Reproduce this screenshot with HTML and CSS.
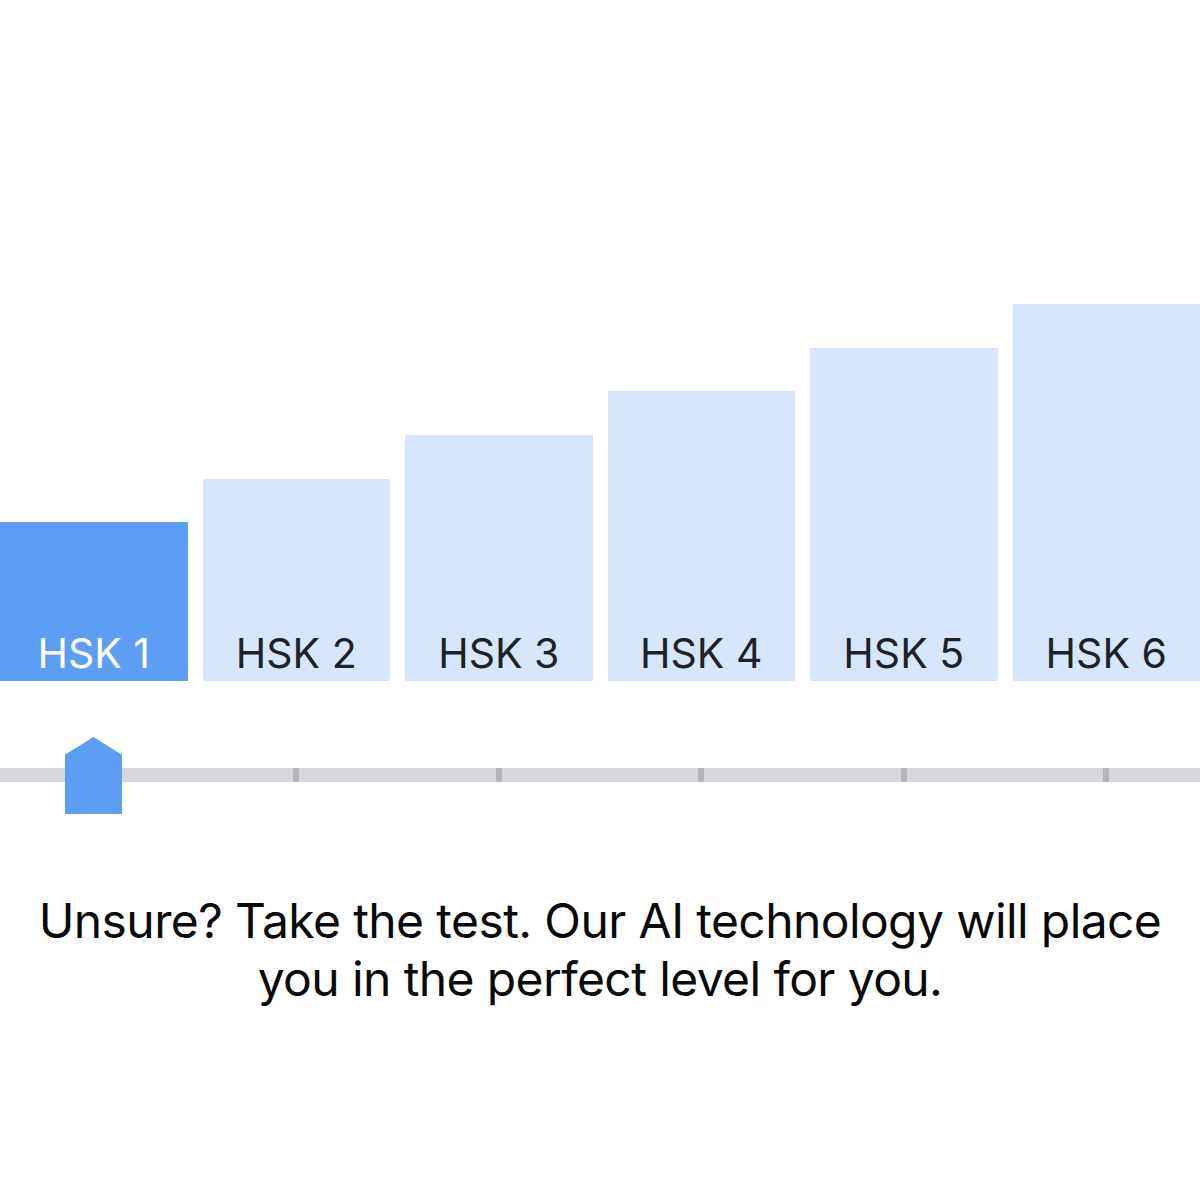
FILE: index.html
```html
<!DOCTYPE html>
<html lang="en">
  <head>
    <meta charset="UTF-8" />
    <title>Choose your level</title>
    <link rel="stylesheet" href="styles.css">
  </head>
  <body>
    <div class="level-picker">
      <div class="chart">
        <div class="bar active" style="height: 159px"><span>HSK 1</span></div>
        <div class="bar" style="height: 202px"><span>HSK 2</span></div>
        <div class="bar" style="height: 246px"><span>HSK 3</span></div>
        <div class="bar" style="height: 290px"><span>HSK 4</span></div>
        <div class="bar" style="height: 333px"><span>HSK 5</span></div>
        <div class="bar" style="height: 377px"><span>HSK 6</span></div>
      </div>

      <div class="slider">
        <div class="track">
          <div class="stop"><i></i></div>
          <div class="stop"><i></i></div>
          <div class="stop"><i></i></div>
          <div class="stop"><i></i></div>
          <div class="stop"><i></i></div>
          <div class="stop"><i></i></div>
        </div>
        <div class="thumb"></div>
      </div>

      <p class="hint">
        Unsure? Take the test. Our AI technology will place<br />
        you in the perfect level for you.
      </p>
    </div>
  </body>
</html>
```

FILE: styles.css
```css
body {
  margin: 0;
  padding: 0;
  background: #ffffff;
  font-family: "Inter", "Roboto", sans-serif;
}

.level-picker {
  width: 1200px;
  overflow: hidden;
}

.chart {
  display: flex;
  align-items: flex-end;
  gap: 15px;
  margin-top: 304px;
}

.bar {
  flex: 1;
  display: flex;
  align-items: flex-end;
  justify-content: center;
  background-color: #d7e6fa;
  color: #1d2229;
  font-size: 41px;
  line-height: 1;
  padding-bottom: 7px;
  box-sizing: border-box;
}

.bar.active {
  background-color: #5b9ef4;
  color: #ffffff;
}

/* Slider */
.slider {
  position: relative;
  height: 77px;
  margin-top: 56px;
}

.track {
  position: absolute;
  left: 0;
  right: 0;
  top: 31px;
  height: 14px;
  background-color: #d6d6db;
  display: flex;
  gap: 15px;
}

.stop {
  flex: 1;
  display: flex;
  justify-content: center;
}

.stop i {
  display: block;
  width: 6px;
  height: 14px;
  background-color: #b5b5ba;
}

.thumb {
  position: absolute;
  left: 65px;
  top: 0;
  width: 57px;
  height: 77px;
  background-color: #5b9ef4;
  clip-path: polygon(50% 0, 100% 23%, 100% 100%, 0 100%, 0 23%);
}

.hint {
  margin: 78px 0 0;
  text-align: center;
  font-size: 48px;
  letter-spacing: -0.6px;
  line-height: 58px;
  color: #0a0a0a;
}
```
